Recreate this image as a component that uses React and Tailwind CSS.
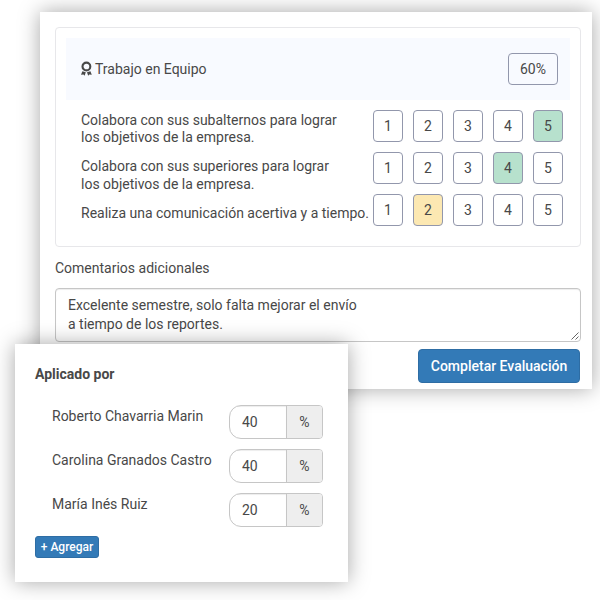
import React from "react";

const criteria = [
  { lines: ["Colabora con sus subalternos para lograr", "los objetivos de la empresa."], score: 5, pad: "pt-[2px] leading-[17px]" },
  { lines: ["Colabora con sus superiores para lograr", "los objetivos de la empresa."], score: 4, pad: "pt-[5px] leading-[18px]" },
  { lines: ["Realiza una comunicación acertiva y a tiempo."], score: 2, pad: "pt-[10px] leading-[18px]" },
];

const people = [
  { name: "Roberto Chavarria Marin", value: 40 },
  { name: "Carolina Granados Castro", value: 40 },
  { name: "María Inés Ruiz", value: 20 },
];

function AwardIcon() {
  return (
    <svg className="h-4 w-[11px] shrink-0" viewBox="0 0 11 16" fill="none">
      <circle cx="5.4" cy="5.5" r="3.9" stroke="#484848" strokeWidth="2.1" />
      <path d="M1.4 10.2 4.8 11.3 3.6 14.8 2.5 13.6 0 13.7ZM9.4 10.2 6 11.3 7.2 14.8 8.3 13.6 10.8 13.7Z" fill="#484848" />
    </svg>
  );
}

function ScoreBox({ value, selected }) {
  const fill = !selected ? "bg-white" : value > 3 ? "bg-[#b7e1cd]" : "bg-[#fce8b2]";
  return (
    <div className={`flex h-8 w-[30px] items-center justify-center rounded-[4px] border border-[#9297ac] ${fill}`}>
      {value}
    </div>
  );
}

function EvaluationCard() {
  return (
    <section className="ml-10 flex h-[377px] w-[552px] flex-col bg-white pt-[15px] pr-[11px] pl-[15px] shadow-[0_0_20px_rgba(0,0,0,0.35)]">
      <div className="h-[220px] rounded-[4px] border border-[#e7e7ea] p-[10px]">
        <header className="flex h-[62px] items-center justify-between bg-[#f8faff] pr-3 pl-[15px]">
          <h2 className="flex items-center gap-[3px]">
            <AwardIcon />
            <span>Trabajo en Equipo</span>
          </h2>
          <div className="flex h-8 w-[50px] items-center justify-center rounded-[4px] border border-[#9297ac]">60%</div>
        </header>
        <div className="flex flex-col gap-[10px] pt-[10px] pr-[7px] pl-[15px]">
          {criteria.map((item) => (
            <div key={item.score} className="flex h-8 justify-between">
              <p className={`whitespace-nowrap ${item.pad}`}>
                {item.lines.map((line) => (
                  <span key={line} className="block">{line}</span>
                ))}
              </p>
              <div className="flex gap-[10px]">
                {[1, 2, 3, 4, 5].map((n) => (
                  <ScoreBox key={n} value={n} selected={n === item.score} />
                ))}
              </div>
            </div>
          ))}
        </div>
      </div>
      <h3 className="mt-[11px] h-[30px] leading-5">Comentarios adicionales</h3>
      <div className="flex h-[54px] items-end rounded-[4px] border border-[#c6c6c6] pl-3 shadow-[inset_0_1px_1px_rgba(0,0,0,0.075)]">
        <p className="grow self-start pt-[7px] leading-[19px]">
          Excelente semestre, solo falta mejorar el envío
          <br />a tiempo de los reportes.
        </p>
        <svg className="mr-px mb-px h-2 w-2" viewBox="0 0 8 8" stroke="#555" strokeWidth="0.9">
          <path d="M0.5 7.5 7.5 0.5M4.5 7.5 7.5 4.5" />
        </svg>
      </div>
      <button className="mt-[7px] mr-px h-[34px] w-[162px] self-end rounded-[4px] border border-[#2e6da4] bg-[#337ab7] font-medium text-white">
        Completar Evaluación
      </button>
    </section>
  );
}

function AppliedByCard() {
  return (
    <section className="absolute top-[344px] left-[15px] h-[238px] w-[333px] bg-white pt-5 pr-[25px] pl-5 shadow-[0_0_20px_rgba(0,0,0,0.35)]">
      <h2 className="h-[41px] leading-5 font-bold">Aplicado por</h2>
      <div className="flex flex-col gap-[10px] pl-[17px]">
        {people.map((person) => (
          <div key={person.name} className="flex h-[34px] justify-between">
            <span className="pt-px leading-5">{person.name}</span>
            <div className="flex w-[94px] overflow-hidden rounded-l-[12px] rounded-r-[4px] border border-[#c6c6c6]">
              <span className="flex w-[57px] items-center border-r border-[#c6c6c6] pl-3 shadow-[inset_0_1px_1px_rgba(0,0,0,0.075)]">
                {person.value}
              </span>
              <span className="flex grow items-center justify-center bg-[#eee]">%</span>
            </div>
          </div>
        ))}
      </div>
      <button className="mt-[9px] block h-[22px] w-16 rounded-[3px] border border-[#2e6da4] bg-[#337ab7] text-[12px] leading-5 font-medium text-white">
        + Agregar
      </button>
    </section>
  );
}

export default function App() {
  return (
    <main className="relative h-[600px] w-[600px] overflow-hidden bg-white pt-3 font-['Roboto',sans-serif] text-[14px] leading-5 text-[#484848]">
      <EvaluationCard />
      <AppliedByCard />
    </main>
  );
}
